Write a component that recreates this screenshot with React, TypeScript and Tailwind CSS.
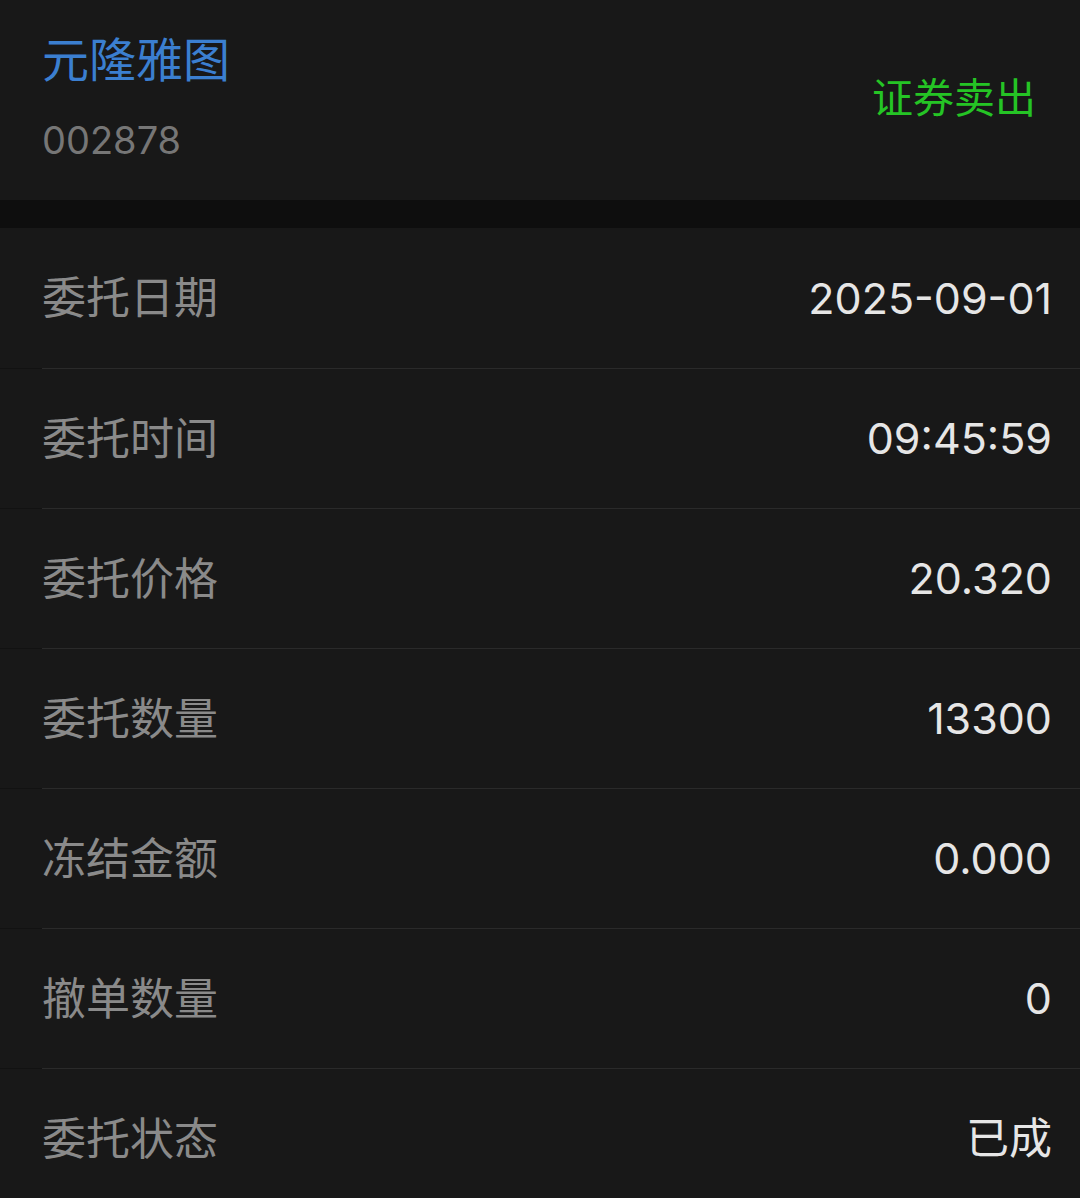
const rows: [string, string][] = [
  ['委托日期', '2025-09-01'],
  ['委托时间', '09:45:59'],
  ['委托价格', '20.320'],
  ['委托数量', '13300'],
  ['冻结金额', '0.000'],
  ['撤单数量', '0'],
  ['委托状态', '已成'],
]

const font = { fontFamily: 'Inter, "Noto Sans CJK SC", sans-serif' }

export default function App() {
  return (
    <div className="w-[1080px] h-[1198px] overflow-hidden bg-[#181818]" style={font}>
      {/* header */}
      <div className="h-[200px] flex items-center justify-between pl-[42px] pr-[44px] bg-[#181818]">
        <div className="flex flex-col">
          <div className="text-[47px] leading-[56px] text-[#3b7fd0] mt-[-6px]">元隆雅图</div>
          <div className="text-[38px] leading-[46px] text-[#767676] mt-[29px]">002878</div>
        </div>
        <div className="text-[41px] leading-[50px] text-[#25c425] mt-[-4px]">证券卖出</div>
      </div>

      <div className="h-[28px] bg-[#0e0e0e]" />

      {/* details */}
      <div className="flex flex-col">
        {rows.map(([label, value], i) => (
          <div key={label} className="flex flex-col">
            {i > 0 && (
              <div className="flex h-px">
                <div className="w-[42px] bg-[#121212]" />
                <div className="flex-1 bg-[#2a2a2a]" />
              </div>
            )}
            <div
              className={`${i === 0 ? 'h-[140px]' : 'h-[139px]'} flex items-center justify-between pl-[42px] pr-[28px]`}
            >
              <span className="text-[44px] text-[#8a8a8a]">{label}</span>
              <span className="text-[43px] text-[#e6e6e6]">{value}</span>
            </div>
          </div>
        ))}
      </div>
    </div>
  )
}
